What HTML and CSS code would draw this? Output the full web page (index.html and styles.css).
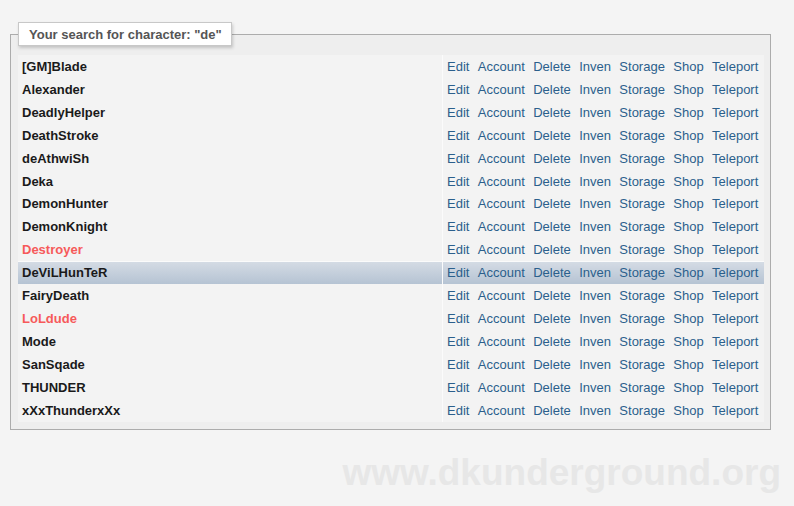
FILE: index.html
```html
<!DOCTYPE html>
<html>
<head>
<meta charset="utf-8">
<link rel="stylesheet" href="styles.css">
</head>
<body>
<fieldset class="results">
  <legend class="results-title">Your search for character: "de"</legend>
  <table class="char-table">
    <tbody>
      <tr><td class="name">[GM]Blade</td><td class="actions"><a>Edit</a><a>Account</a><a>Delete</a><a>Inven</a><a>Storage</a><a>Shop</a><a>Teleport</a></td></tr>
      <tr><td class="name">Alexander</td><td class="actions"><a>Edit</a><a>Account</a><a>Delete</a><a>Inven</a><a>Storage</a><a>Shop</a><a>Teleport</a></td></tr>
      <tr><td class="name">DeadlyHelper</td><td class="actions"><a>Edit</a><a>Account</a><a>Delete</a><a>Inven</a><a>Storage</a><a>Shop</a><a>Teleport</a></td></tr>
      <tr><td class="name">DeathStroke</td><td class="actions"><a>Edit</a><a>Account</a><a>Delete</a><a>Inven</a><a>Storage</a><a>Shop</a><a>Teleport</a></td></tr>
      <tr><td class="name">deAthwiSh</td><td class="actions"><a>Edit</a><a>Account</a><a>Delete</a><a>Inven</a><a>Storage</a><a>Shop</a><a>Teleport</a></td></tr>
      <tr><td class="name">Deka</td><td class="actions"><a>Edit</a><a>Account</a><a>Delete</a><a>Inven</a><a>Storage</a><a>Shop</a><a>Teleport</a></td></tr>
      <tr><td class="name">DemonHunter</td><td class="actions"><a>Edit</a><a>Account</a><a>Delete</a><a>Inven</a><a>Storage</a><a>Shop</a><a>Teleport</a></td></tr>
      <tr><td class="name">DemonKnight</td><td class="actions"><a>Edit</a><a>Account</a><a>Delete</a><a>Inven</a><a>Storage</a><a>Shop</a><a>Teleport</a></td></tr>
      <tr><td class="name online">Destroyer</td><td class="actions"><a>Edit</a><a>Account</a><a>Delete</a><a>Inven</a><a>Storage</a><a>Shop</a><a>Teleport</a></td></tr>
      <tr class="hover"><td class="name">DeViLHunTeR</td><td class="actions"><a>Edit</a><a>Account</a><a>Delete</a><a>Inven</a><a>Storage</a><a>Shop</a><a>Teleport</a></td></tr>
      <tr><td class="name">FairyDeath</td><td class="actions"><a>Edit</a><a>Account</a><a>Delete</a><a>Inven</a><a>Storage</a><a>Shop</a><a>Teleport</a></td></tr>
      <tr><td class="name online">LoLdude</td><td class="actions"><a>Edit</a><a>Account</a><a>Delete</a><a>Inven</a><a>Storage</a><a>Shop</a><a>Teleport</a></td></tr>
      <tr><td class="name">Mode</td><td class="actions"><a>Edit</a><a>Account</a><a>Delete</a><a>Inven</a><a>Storage</a><a>Shop</a><a>Teleport</a></td></tr>
      <tr><td class="name">SanSqade</td><td class="actions"><a>Edit</a><a>Account</a><a>Delete</a><a>Inven</a><a>Storage</a><a>Shop</a><a>Teleport</a></td></tr>
      <tr><td class="name">THUNDER</td><td class="actions"><a>Edit</a><a>Account</a><a>Delete</a><a>Inven</a><a>Storage</a><a>Shop</a><a>Teleport</a></td></tr>
      <tr><td class="name">xXxThunderxXx</td><td class="actions"><a>Edit</a><a>Account</a><a>Delete</a><a>Inven</a><a>Storage</a><a>Shop</a><a>Teleport</a></td></tr>
    </tbody>
  </table>
</fieldset>
<div class="watermark">www.dkunderground.org</div>
</body>
</html>
```

FILE: styles.css
```css
html, body {
  margin: 0;
  padding: 0;
  background: #f4f4f4;
  font-family: "Liberation Sans", Arial, sans-serif;
  font-size: 13px;
}

body {
  padding: 22px 0 0 10px;
}

.results {
  box-sizing: border-box;
  width: 761px;
  margin: 0;
  padding: 9px 6px 7px 7px;
  border: 1px solid #acacac;
  background: #eeeeee;
}

.results-title {
  box-sizing: border-box;
  height: 24px;
  margin-left: 0;
  padding: 0 9px 0 10px;
  line-height: 24px;
  background: #ffffff;
  border: 1px solid #c8c8c8;
  box-shadow: 1px 2px 3px rgba(0, 0, 0, 0.18);
  color: #555555;
  font-weight: bold;
  font-size: 13px;
}

.char-table {
  width: 746px;
  border-collapse: collapse;
  border-spacing: 0;
  background: #f3f3f3;
}

.char-table td {
  height: 22.93px;
  padding: 0;
  vertical-align: middle;
  white-space: nowrap;
}

.name {
  width: 420px;
  padding-left: 4px !important;
  font-weight: bold;
  color: #1a1a1a;
}

.name.online {
  color: #f65a5a;
}

.actions {
  border-left: 1px solid #fbfbfb;
  padding-left: 4px !important;
}

.actions a {
  color: #2b5f8c;
  margin-right: 8.4px;
  text-decoration: none;
}

.actions a:last-child {
  margin-right: 0;
}

.hover td {
  background: linear-gradient(to bottom, #fbfbfb 0, #fbfbfb 1px, #d4dbe4 1px, #b5c3d3 100%);
}

.watermark {
  width: 771px;
  margin-top: 23px;
  text-align: right;
  font-weight: bold;
  font-size: 37px;
  color: #e7e7e7;
  line-height: 40px;
}
```
